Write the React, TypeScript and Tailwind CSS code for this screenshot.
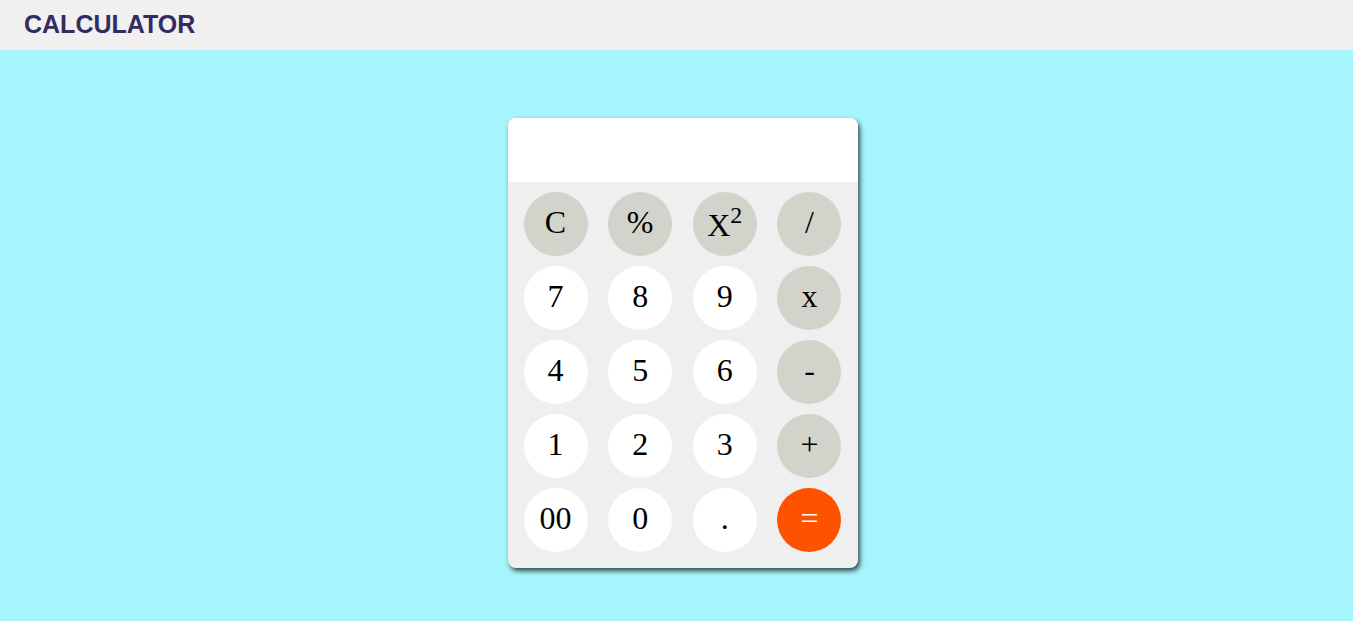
import React from "react";

type Key = { label: React.ReactNode; kind: "op" | "num" | "eq" };

const rows: Key[][] = [
  [
    { label: "C", kind: "op" },
    { label: "%", kind: "op" },
    { label: (<span className="relative top-[3px]">X<span className="text-[24px] relative -top-[13px]">2</span></span>), kind: "op" },
    { label: "/", kind: "op" },
  ],
  [
    { label: "7", kind: "num" },
    { label: "8", kind: "num" },
    { label: "9", kind: "num" },
    { label: "x", kind: "op" },
  ],
  [
    { label: "4", kind: "num" },
    { label: "5", kind: "num" },
    { label: "6", kind: "num" },
    { label: "-", kind: "op" },
  ],
  [
    { label: "1", kind: "num" },
    { label: "2", kind: "num" },
    { label: "3", kind: "num" },
    { label: "+", kind: "op" },
  ],
  [
    { label: "00", kind: "num" },
    { label: "0", kind: "num" },
    { label: ".", kind: "num" },
    { label: "=", kind: "eq" },
  ],
];

export default function App() {
  return (
    <div className="min-h-[621px] bg-[#a6f5fc] flex flex-col">
      <header className="h-[50px] bg-[#f1eff0] flex items-center px-6">
        <h1 className="text-[25px] font-bold text-[#332c5f] [font-family:'Liberation_Sans',Arial,sans-serif]">
          CALCULATOR
        </h1>
      </header>
      <div className="flex justify-center pt-[68px] pl-3">
        <div className="w-[350px] rounded-lg overflow-hidden bg-[#efefef] shadow-[2px_3px_5px_rgba(0,0,0,0.7)]">
          <div className="h-16 bg-white" />
          <div className="px-4 pt-[10px] pb-4 flex flex-col gap-[10px] [font-family:'Liberation_Serif','Times_New_Roman',serif]">
            {rows.map((row, i) => (
              <div key={i} className="flex justify-between">
                {row.map((k, j) => (
                  <button
                    key={j}
                    className={
                      "w-16 h-16 rounded-full flex items-center justify-center text-[32px] leading-none pb-[4px] " +
                      (k.kind === "op"
                        ? "bg-[#d2d4cb] text-black"
                        : k.kind === "eq"
                        ? "bg-[#ff5200] text-white"
                        : "bg-white text-black")
                    }
                  >
                    {k.label}
                  </button>
                ))}
              </div>
            ))}
          </div>
        </div>
      </div>
    </div>
  );
}
